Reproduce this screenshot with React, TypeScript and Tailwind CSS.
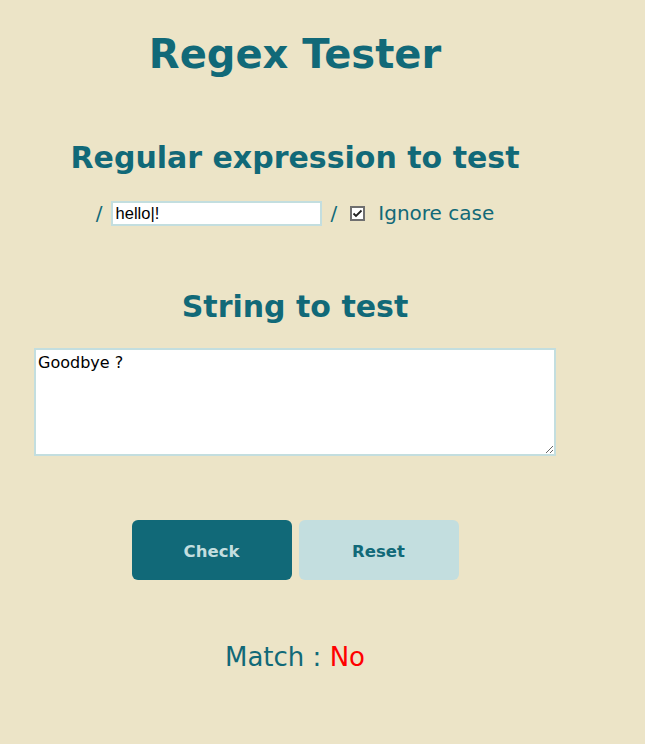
import { useState } from "react";

const font = { fontFamily: '"DejaVu Sans", Verdana, sans-serif' };

export default function App() {
  const [pattern, setPattern] = useState("hello|!");
  const [ignoreCase, setIgnoreCase] = useState(true);
  const [text, setText] = useState("Goodbye ?");
  const [match, setMatch] = useState<boolean | null>(false);

  function check() {
    try {
      setMatch(new RegExp(pattern, ignoreCase ? "i" : "").test(text));
    } catch {
      setMatch(false);
    }
  }

  function reset() {
    setPattern("");
    setText("");
    setMatch(null);
  }

  return (
    <div className="min-h-[744px] w-full bg-[#ece4c7] text-[#116978]" style={font}>
      <div className="w-[590px] flex flex-col items-center">
        <h1 className="mt-[30px] text-[40px] font-bold leading-[48px]">Regex Tester</h1>

        <h2 className="mt-[62px] text-[30px] font-bold leading-[36px]">Regular expression to test</h2>
        <div className="mt-[22px] flex items-center text-[20px]">
          <span className="mr-[8px]">/</span>
          <input
            className="w-[211px] h-[25px] border-2 border-[#c3dedf] bg-white px-[3px] text-[16.5px] text-black outline-none"
            style={{ fontFamily: '"Liberation Sans", Arial, sans-serif' }}
            value={pattern}
            onChange={(e) => setPattern(e.target.value)}
          />
          <span className="ml-[9px] mr-[13px]">/</span>
          {/* checkbox, drawn like the native one */}
          <button
            type="button"
            onClick={() => setIgnoreCase((v) => !v)}
            className="w-[15px] h-[15px] mr-[13px] border-2 border-[#6f6f6f] bg-white flex items-center justify-center"
          >
            {ignoreCase && (
              <svg width="11" height="11" viewBox="0 0 11 11">
                <path d="M1.5 5.5 L4 8 L9.5 2.5" fill="none" stroke="#222" strokeWidth="1.8" />
              </svg>
            )}
          </button>
          <span>Ignore case</span>
        </div>

        <h2 className="mt-[61px] text-[30px] font-bold leading-[36px]">String to test</h2>
        <textarea
          className="mt-[23px] w-[522px] h-[108px] border-2 border-[#c3dedf] bg-white px-[2px] py-[1px] text-[16px] text-black outline-none"
          style={font}
          value={text}
          onChange={(e) => setText(e.target.value)}
        />

        <div className="mt-[64px] flex gap-[7px]">
          <button
            onClick={check}
            className="w-[160px] h-[60px] pt-[5px] rounded-[6px] bg-[#116978] text-[#c3dedf] text-[16.5px] font-bold"
          >
            Check
          </button>
          <button
            onClick={reset}
            className="w-[160px] h-[60px] pt-[5px] rounded-[6px] bg-[#c3dedf] text-[#116978] text-[16.5px] font-bold"
          >
            Reset
          </button>
        </div>

        <p className="mt-[61px] text-[26px] leading-[32px]">
          Match : {match === null ? "" : <span className="text-[#ff0000]">{match ? "Yes" : "No"}</span>}
        </p>
      </div>
    </div>
  );
}
